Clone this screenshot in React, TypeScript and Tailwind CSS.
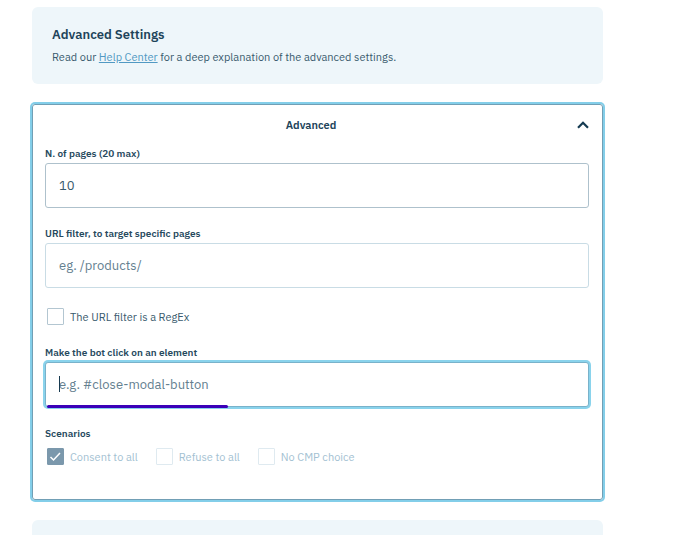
import { clsx } from "clsx";

const scenarios = [
  { id: "consent", label: "Consent to all", checked: true },
  { id: "refuse", label: "Refuse to all", checked: false },
  { id: "no-cmp", label: "No CMP choice", checked: false },
];

type CheckboxProps = {
  id: string;
  label: string;
  checked?: boolean;
  disabled?: boolean;
};

const Checkbox = ({ id, label, checked, disabled }: CheckboxProps) => {
  return (
    <label
      htmlFor={id}
      className={clsx(
        "flex items-center gap-1.5 text-[11px] leading-4",
        disabled ? "text-[#a3c1d2]" : "text-[#385a6d]"
      )}
    >
      <span className="relative block size-[17px]">
        <input
          id={id}
          type="checkbox"
          defaultChecked={checked}
          disabled={disabled}
          className={clsx(
            "block size-[17px] appearance-none rounded-[1px] border bg-white checked:border-[#7b98ac] checked:bg-[#7b98ac]",
            disabled ? "border-[#dfeaf0]" : "border-[#b3c6d1]"
          )}
        />
        {checked && (
          <svg
            viewBox="0 0 17 17"
            fill="none"
            stroke="white"
            strokeWidth="1.5"
            className="pointer-events-none absolute inset-0"
          >
            <path d="M3.5 9l3 3 6.5-7" />
          </svg>
        )}
      </span>
      {label}
    </label>
  );
};

type FieldProps = {
  id: string;
  label: string;
  value?: string;
  placeholder?: string;
  active?: boolean;
};

const Field = ({ id, label, value, placeholder, active }: FieldProps) => {
  return (
    <div>
      <label
        htmlFor={id}
        className="block text-[10px] leading-[18px] font-semibold text-[#274a5e]"
      >
        {label}
      </label>
      <div className="relative">
        <input
          id={id}
          type="text"
          defaultValue={value}
          placeholder={placeholder}
          className={clsx(
            "block h-[45px] w-full rounded-[3px] border bg-white px-[13px] text-[13px] text-[#385a6d] outline-none placeholder:text-[#64808f]",
            active && "border-[#79b2ca] ring-2 ring-[#8ad3ec]",
            !active && (value ? "border-[#aec1cc]" : "border-[#c9dce5]")
          )}
        />
        {active && (
          <>
            <span className="absolute top-3.5 left-3.5 h-4 w-px bg-[#173a50]" />
            <span className="absolute -bottom-px left-0.5 h-[3px] w-1/3 rounded-xs bg-[#3a00b8]" />
          </>
        )}
      </div>
    </div>
  );
};

const App = () => {
  return (
    <main className="flex min-h-screen flex-col gap-5 bg-white pt-[7px] pr-[85px] pl-8 font-['IBM_Plex_Sans','Roboto',sans-serif]">
      <section className="rounded-md bg-[#eef6fa] px-5 py-[18px]">
        <h2 className="text-[13px] leading-5 font-semibold text-[#204359]">
          Advanced Settings
        </h2>
        <p className="mt-[3px] text-[11px] leading-[18px] text-[#385a6d]">
          Read our{" "}
          <a href="#help" className="text-[#5199c3] underline">
            Help Center
          </a>{" "}
          for a deep explanation of the advanced settings.
        </p>
      </section>

      <section className="rounded-[3px] border border-[#719fb5] pr-[13px] pb-[34px] pl-3 ring-2 ring-[#83cee9]">
        <button
          type="button"
          className="relative flex h-10 w-full items-center justify-center pr-3 text-[11px] font-semibold text-[#204359]"
        >
          Advanced
          <svg
            viewBox="0 0 12 8"
            fill="none"
            stroke="#153b52"
            strokeWidth="2.2"
            className="absolute right-0 h-2 w-3"
          >
            <path d="M1 6.8l5-5 5 5" />
          </svg>
        </button>

        <div className="flex flex-col gap-[17px]">
          <Field id="pages" label="N. of pages (20 max)" value="10" />
          <Field
            id="url-filter"
            label="URL filter, to target specific pages"
            placeholder="eg. /products/"
          />
        </div>
        <div className="mt-5 mb-[19px] pl-0.5">
          <Checkbox id="regex" label="The URL filter is a RegEx" />
        </div>
        <Field
          id="click-element"
          label="Make the bot click on an element"
          placeholder="e.g. #close-modal-button"
          active
        />

        <fieldset className="mt-[18px]">
          <legend className="text-[10px] leading-[18px] font-semibold text-[#274a5e]">
            Scenarios
          </legend>
          <div className="mt-[5px] flex gap-[18px] pl-0.5">
            {scenarios.map((scenario) => (
              <Checkbox key={scenario.id} disabled {...scenario} />
            ))}
          </div>
        </fieldset>
      </section>

      <section className="flex-1 rounded-t-md bg-[#eef6fa]" />
    </main>
  );
};

export default App;
